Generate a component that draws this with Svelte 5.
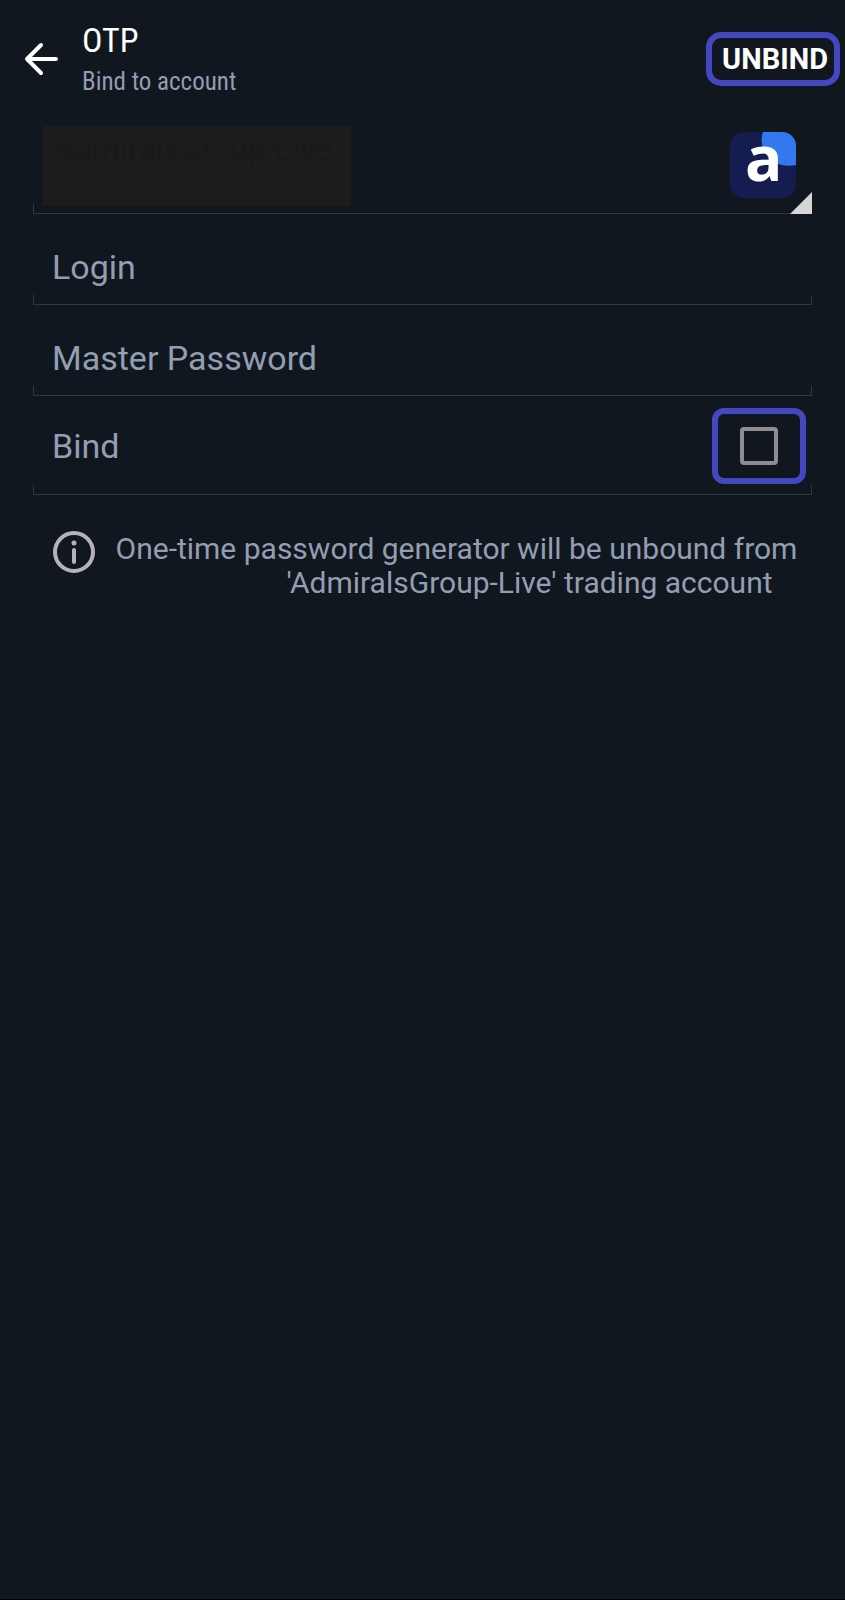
<script lang="ts">
	const servers = ["AdmiralsGroup-Live"];

	let server = $state(servers[0]);
	let login = $state("");
	let password = $state("");
	let bound = $state(false);

	function unbind(event: SubmitEvent) {
		event.preventDefault();
		bound = false;
	}
</script>

<div class="screen">
	<header>
		<button class="back" type="button" aria-label="Back">
			<svg width="36" height="36" viewBox="0 0 36 36" aria-hidden="true">
				<path d="M18 4 4 18l14 14M4 18h29" />
			</svg>
		</button>
		<div class="titles">
			<h1>OTP</h1>
			<p>Bind to account</p>
		</div>
		<button class="unbind" type="submit" form="otp">UNBIND</button>
	</header>

	<form id="otp" onsubmit={unbind}>
		<div class="row server">
			<select aria-label="Server" bind:value={server}>
				{#each servers as name}
					<option value={name}>{name}</option>
				{/each}
			</select>
			<svg class="logo" width="66" height="66" viewBox="0 0 66 66" aria-hidden="true">
				<defs>
					<clipPath id="tile"><rect width="66" height="66" rx="14" /></clipPath>
				</defs>
				<g clip-path="url(#tile)">
					<rect width="66" height="66" fill="#141c50" />
					<path d="M33 0C30 8 32 18 38 25C45 33 56 35 66 33V0Z" fill="#3478f0" />
				</g>
				<text x="15" y="49">a</text>
			</svg>
			<svg class="corner" width="22" height="22" viewBox="0 0 22 22" aria-hidden="true">
				<path d="M22 0v22H0z" fill="#d6d6d6" />
			</svg>
		</div>

		<div class="row">
			<label for="login">Login</label>
			<input id="login" type="text" bind:value={login} />
		</div>

		<div class="row">
			<label for="password">Master Password</label>
			<input id="password" type="password" bind:value={password} />
		</div>

		<div class="row bind">
			<label for="bind">Bind</label>
			<div class="highlight">
				<input id="bind" type="checkbox" bind:checked={bound} />
			</div>
		</div>
	</form>

	<div class="info">
		<svg width="42" height="42" viewBox="0 0 42 42" aria-hidden="true">
			<circle cx="21" cy="21" r="19" fill="none" stroke="#b4b4b4" stroke-width="4" />
			<circle cx="21" cy="12" r="2.5" fill="#b4b4b4" />
			<path d="M21 19v12" stroke="#b4b4b4" stroke-width="4" stroke-linecap="round" />
		</svg>
		<p>
			One-time password generator will be unbound from
			<span class="number"></span>'{server}' trading account
		</p>
	</div>
</div>

<style>
	:global(body) {
		margin: 0;
		background: #10171f;
	}

	.screen {
		box-sizing: border-box;
		min-height: 100vh;
		border-bottom: 1px solid #000;
		background: #10171f;
		color: #939eb2;
		font-family: Roboto, sans-serif;
	}

	header {
		display: flex;
		align-items: center;
		height: 118px;
		padding: 0 5px 0 23px;
	}

	h1,
	p {
		margin: 0;
		font-weight: 400;
	}

	button {
		font-family: inherit;
		cursor: pointer;
	}

	.back {
		display: flex;
		padding: 0;
		border: 0;
		background: none;
	}

	.back path {
		fill: none;
		stroke: #fff;
		stroke-width: 4;
		stroke-linecap: round;
		stroke-linejoin: round;
	}

	.titles {
		flex: 1;
		padding: 4px 0 0 23px;
		font-family: "Roboto Condensed", "Liberation Sans Narrow", Roboto, sans-serif;
	}

	h1 {
		color: #fff;
		font-size: 34px;
		line-height: 42px;
	}

	.titles p {
		font-size: 25px;
		line-height: 42px;
	}

	.unbind {
		height: 54px;
		padding: 0 6px 0 10px;
		border: 6px solid #4249c0;
		border-radius: 15px;
		background: none;
		color: #fff;
		font-size: 29px;
		font-weight: 700;
	}

	form {
		padding: 0 33px;
	}

	/* thin underline with a short tick at each end */
	.row {
		display: flex;
		align-items: center;
		box-sizing: border-box;
		height: 91px;
		padding: 14px 6px 0 19px;
		background:
			linear-gradient(#303741, #303741) left bottom / 1px 10px no-repeat,
			linear-gradient(#303741, #303741) right bottom / 1px 10px no-repeat,
			linear-gradient(#303741, #303741) left bottom / 100% 1px no-repeat;
		font-size: 34px;
	}

	.row input[type="text"],
	.row input[type="password"] {
		flex: 1;
		min-width: 0;
		padding: 0 12px;
		border: 0;
		outline: 0;
		background: none;
		color: #fff;
		font: inherit;
		text-align: right;
	}

	.server {
		height: 96px;
		padding: 0 0 0 10px;
	}

	select {
		width: 308px;
		height: 80px;
		padding: 0 10px 34px;
		border: 0;
		appearance: none;
		background: #1c1c1c;
		color: #1a1a1a;
		font-family: inherit;
		font-size: 32px;
	}

	.logo {
		margin: 0 -6px 2px auto;
		overflow: visible;
	}

	.logo text {
		fill: #fff;
		font-family: "Open Sans", sans-serif;
		font-size: 62px;
		font-weight: 700;
	}

	.corner {
		align-self: flex-end;
	}

	.bind {
		height: 99px;
		padding-top: 0;
	}

	.highlight {
		display: flex;
		align-items: center;
		justify-content: center;
		box-sizing: border-box;
		width: 94px;
		height: 76px;
		margin: 0 0 0 auto;
		border: 6px solid #4249c0;
		border-radius: 12px;
	}

	input[type="checkbox"] {
		box-sizing: border-box;
		width: 38px;
		height: 38px;
		margin: 0;
		border: 4px solid #8e8e8e;
		border-radius: 4px;
		appearance: none;
	}

	input[type="checkbox"]:checked {
		background: #4249c0;
	}

	.info {
		display: flex;
		align-items: flex-start;
		gap: 20px;
		padding: 36px 47px 0 53px;
	}

	.info svg {
		flex: none;
	}

	.info p {
		flex: 1;
		padding-top: 1px;
		font-size: 30px;
		line-height: 34px;
		text-align: center;
	}

	/* room kept for the account number */
	.number {
		display: inline-block;
		width: 146px;
	}
</style>
